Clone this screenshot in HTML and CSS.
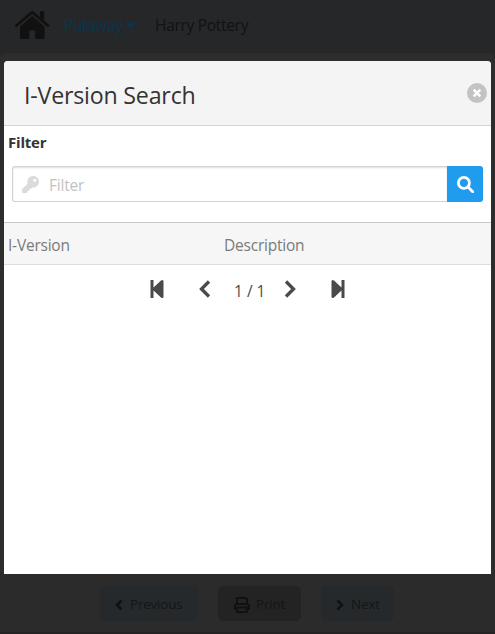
FILE: index.html
```html
<!DOCTYPE html>
<html lang="en">
<head>
<meta charset="utf-8">
<title>I-Version Search</title>
<link rel="stylesheet" href="styles.css">
</head>
<body>
<div class="page">
  <header class="topbar">
    <svg class="home" viewBox="0 0 36 30"><path d="M17 1.2q1.2-.8 2.4 0L26 7V1.2h4.2v9.4l5.6 5-1.8 2L18.200 4 2.300 17.600.500 15.600z"/><path d="M18.200 6 30.500 16.600V28q0 1-1 1H21.200v-8.500h-6V29H7q-1 0-1-1V16.600z"/></svg>
    <nav class="nav">
      <a class="nav-link">Putaway</a>
      <svg class="caret" viewBox="0 0 10 8"><path d="M1 1.500 5 5.500 9 1.500"/></svg>
      <span class="user">Harry Pottery</span>
    </nav>
  </header>
  <main class="sheet"></main>
  <footer class="actions">
    <button class="btn btn-previous"><svg class="chev" viewBox="0 0 8 12"><path d="M6.500 1.500 2 6l4.500 4.500"/></svg><span>Previous</span></button>
    <button class="btn btn-print"><svg class="printer" viewBox="0 0 16 16"><path d="M3 7V1h8.500L13 2.500V7M3 12H1V9q0-2 2-2h10q2 0 2 2v3h-2M3.200 10.500h9.600V15H3.200z"/></svg><span>Print</span></button>
    <button class="btn btn-next"><svg class="chev" viewBox="0 0 8 12"><path d="M1.500 1.500 6 6l-4.500 4.500"/></svg><span>Next</span></button>
  </footer>
</div>
<section class="modal">
  <header class="modal-head">
    <h1 class="title">I-Version Search</h1>
    <svg class="close" viewBox="0 0 20 20"><circle cx="10" cy="10" r="10"/><path d="m6.700 6.700 6.600 6.600m0-6.600-6.600 6.600"/></svg>
  </header>
  <div class="filter">
    <span class="label">Filter</span>
    <div class="field">
      <div class="input">
        <svg class="key" viewBox="0 0 512 512"><path d="M512 176c0 97-79 176-176 176-11 0-22-1-33-3l-24 27c-5 5-11 8-18 8h-37v40c0 13-11 24-24 24h-40v40c0 13-11 24-24 24H24c-13 0-24-11-24-24v-78c0-6 3-12 7-17l162-162c-6-17-9-36-9-55C160 79 239 0 336 0c97 0 176 79 176 176zM336 128a48 48 0 1 0 96 0 48 48 0 1 0-96 0z"/></svg>
        <span class="placeholder">Filter</span>
      </div>
      <button class="search"><svg viewBox="0 0 16 16"><circle cx="6.500" cy="6.500" r="5.200"/><path d="m10.400 10.400 4.600 4.600"/></svg></button>
    </div>
  </div>
  <div class="columns"><span class="col">I-Version</span><span class="col">Description</span></div>
  <div class="pager">
    <svg class="skip" viewBox="0 0 14 18"><path d="M.500 0h3v7.500L11 .600q2.500-1.500 2.500 1v14.800q0 2.500-2.500 1L3.500 10.500V18h-3z"/></svg>
    <svg class="step prev" viewBox="0 0 12 18"><path d="M10 1.500 2.500 9l7.500 7.500"/></svg>
    <span class="count">1 / 1</span>
    <svg class="step next" viewBox="0 0 12 18"><path d="M2 1.500 9.500 9 2 16.500"/></svg>
    <svg class="skip last" viewBox="0 0 14 18"><path d="M13.500 0h-3v7.500L3 .600Q.500-.900.500 1.600v14.800q0 2.500 2.500 1l7.500-6.900V18h3z"/></svg>
  </div>
</section>
</body>
</html>
```
FILE: styles.css
```css
* { box-sizing: border-box; }
body { margin: 0; background: #2b2b2b; font-family: "Open Sans", "Noto Sans", sans-serif; font-size: 15.500px; letter-spacing: -.22px; line-height: 20px; overflow: hidden; }
svg { display: block; flex: none; }
h1 { margin: 0; font-weight: 400; }
button { border: 0; padding: 0; font: inherit; letter-spacing: inherit; }
.page { height: 634px; display: flex; flex-direction: column; background: #262728; border-bottom: 2px solid #262225; }
.topbar { height: 53px; display: flex; align-items: center; padding: 0 0 4px 14px; color: #111213; }
.home { width: 36px; height: 30px; fill: #111; }
.nav { display: flex; align-items: center; margin-left: 14px; height: 49px; }
.nav-link { width: 59px; color: #0b344f; white-space: nowrap; letter-spacing: -.4px; padding-top: 1px; }
.caret { width: 10px; height: 8px; margin-left: 3px; fill: none; stroke: #0b344f; stroke-width: 2.800; }
.user { margin-left: 19px; padding-top: 1px; letter-spacing: -.3px; }
.sheet { flex: 1; background: #2d2d2d; border-radius: 6px 6px 0 0; }
.actions { height: 60px; display: flex; justify-content: center; align-items: flex-start; gap: 20px; padding: 14px 1px 0 0; background: #2b2b2b; }
.btn { height: 35px; display: flex; align-items: center; border-radius: 5px; font-size: 13.500px; color: #131618; background: #25292b; }
.btn-previous { width: 98px; padding-left: 15px; gap: 7px; }
.btn-print { width: 83px; padding-left: 16px; gap: 6px; background: #232323; color: #151515; }
.btn-next { width: 73px; padding-left: 15px; gap: 7px; }
.btn span { padding-top: 1px; }
.chev { width: 8px; height: 12px; margin-top: 2px; fill: none; stroke: #0f1214; stroke-width: 2.500; }
.printer { width: 16px; height: 16px; margin-top: 2px; fill: none; stroke: #111; stroke-width: 2; }
.modal { position: absolute; left: 4px; top: 61px; width: 487px; height: 513px; background: #fff; border-radius: 4px 4px 0 0; overflow: hidden; }
.modal-head { height: 65px; padding: 3px 4px 0 20px; display: flex; align-items: center; justify-content: space-between; background: #f4f4f4; border-bottom: 1px solid #d4d4d5; }
.title { font-size: 23.200px; line-height: 30px; letter-spacing: -.2px; color: #333; }
.close { width: 20px; height: 20px; margin-top: -3px; fill: #c3c3c3; }
.close path { stroke: #fff; stroke-width: 2.500; }
.filter { height: 96px; padding: 6px 8px 0; }
.label { display: block; margin-left: -4px; font-weight: 700; font-size: 15px; color: #333; letter-spacing: -.2px; }
.field { display: flex; height: 36px; margin-top: 14px; }
.input { flex: 1; display: flex; align-items: center; padding-left: 9px; border: 1px solid #d4d4d5; border-right: 0; border-radius: 3px 0 0 3px; box-shadow: inset 0 1px 2px #ddd; }
.key { width: 17px; height: 17px; fill: #dbdbdb; fill-rule: evenodd; }
.placeholder { margin-left: 10px; padding-top: 2px; color: #c2c2c2; }
.search { width: 36px; display: flex; align-items: center; justify-content: center; background: #209cee; border-radius: 0 3px 3px 0; }
.search svg { width: 17px; height: 17px; fill: none; stroke: #fff; stroke-width: 2.600; stroke-linecap: round; }
.columns { height: 43px; display: grid; grid-template-columns: 216px 1fr; align-items: center; padding: 2px 4px 0; background: #f6f6f6; border-top: 1px solid #c8c8c8; border-bottom: 1px solid #dedede; color: #7a7a7a; }
.pager { display: flex; height: 48px; padding-left: 146px; align-items: center; color: #4a4a4a; }
.skip, .step { height: 18px; fill: #4a4a4a; }
.skip { width: 14px; }
.step { width: 12px; fill: none; stroke: #4a4a4a; stroke-width: 3.300; }
.prev { margin-left: 35px; }
.count { width: 32px; margin: 4px 18px 0 23px; white-space: nowrap; letter-spacing: 0; }
.last { margin-left: 35px; }
```
